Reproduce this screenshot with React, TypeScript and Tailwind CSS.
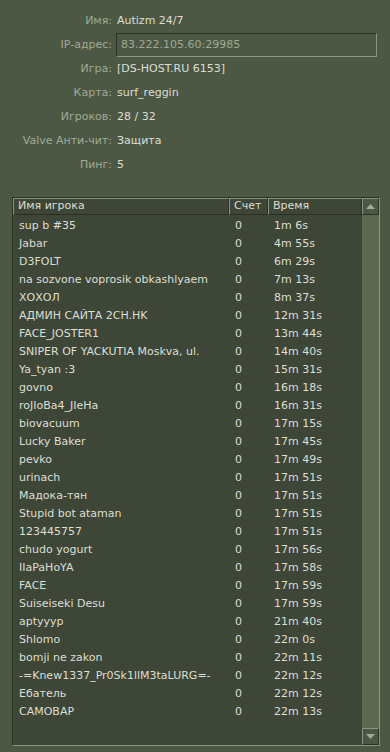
import React from "react";

const info: [string, string][] = [
  ["Имя", "Autizm 24/7"],
  ["IP-адрес", "83.222.105.60:29985"],
  ["Игра", "[DS-HOST.RU 6153]"],
  ["Карта", "surf_reggin"],
  ["Игроков", "28 / 32"],
  ["Valve Анти-чит", "Защита"],
  ["Пинг", "5"],
];

const players: [string, string][] = [
  ["sup b #35", "1m 6s"],
  ["Jabar", "4m 55s"],
  ["D3FOLT", "6m 29s"],
  ["na sozvone voprosik obkashlyaem", "7m 13s"],
  ["ХОХОЛ", "8m 37s"],
  ["АДМИН САЙТА 2CH.HK", "12m 31s"],
  ["FACE_JOSTER1", "13m 44s"],
  ["SNIPER OF YACKUTIA Moskva, ul.", "14m 40s"],
  ["Ya_tyan :3", "15m 31s"],
  ["govno", "16m 18s"],
  ["roJIoBa4_JIeHa", "16m 31s"],
  ["biovacuum", "17m 15s"],
  ["Lucky Baker", "17m 45s"],
  ["pevko", "17m 49s"],
  ["urinach", "17m 51s"],
  ["Мадока-тян", "17m 51s"],
  ["Stupid bot ataman", "17m 51s"],
  ["123445757", "17m 51s"],
  ["chudo yogurt", "17m 56s"],
  ["IIaPaHoYA", "17m 58s"],
  ["FACE", "17m 59s"],
  ["Suiseiseki Desu", "17m 59s"],
  ["aptyyyp", "21m 40s"],
  ["Shlomo", "22m 0s"],
  ["bomji ne zakon", "22m 11s"],
  ["-=Knew1337_Pr0Sk1llM3taLURG=-", "22m 12s"],
  ["Ебатель", "22m 12s"],
  ["САМОВАР", "22m 13s"],
];

function HeaderCell({ label, className }: { label: string; className: string }) {
  return (
    <div
      className={`h-[17px] flex items-center pl-[4px] border-t border-l border-t-[#8a957f] border-l-[#8a957f] border-b border-r border-b-[#2b3025] border-r-[#2b3025] text-[#dcdfd4] ${className}`}
    >
      {label}
    </div>
  );
}

function ScrollButton({ up }: { up: boolean }) {
  return (
    <div className="h-[17px] w-[17px] flex items-center justify-center border-t border-l border-t-[#8a957f] border-l-[#8a957f] border-b border-r border-b-[#2b3025] border-r-[#2b3025] bg-[#4c5844]">
      <svg width="9" height="5" viewBox="0 0 9 5">
        <polygon points={up ? "4.5,0 9,5 0,5" : "0,0 9,0 4.5,5"} fill="#a0aa95" />
      </svg>
    </div>
  );
}

export default function App() {
  return (
    <div
      className="w-[390px] h-[752px] bg-[#4c5844] text-[11px] overflow-hidden flex flex-col"
      style={{ fontFamily: '"DejaVu Sans", Verdana, sans-serif' }}
    >
      <div className="pt-[9px] flex flex-col">
        {info.map(([label, value]) => (
          <div key={label} className="h-[24px] flex items-center">
            <div className="w-[112px] text-right text-[#a0aa95] shrink-0">{label}:</div>
            {label === "IP-адрес" ? (
              <div className="ml-[4px] w-[261px] h-[24px] flex items-center pl-[4px] border border-t-[#2b3025] border-l-[#2b3025] border-b-[#8a957f] border-r-[#8a957f] text-[#a0aa95]">
                {value}
              </div>
            ) : (
              <div className="ml-[5px] text-[#dcdfd4]">{value}</div>
            )}
          </div>
        ))}
      </div>

      <div className="mt-[20px] ml-[12px] mr-[10px] h-[549px] flex border border-t-[#2b3025] border-l-[#2b3025] border-b-[#8a957f] border-r-[#8a957f] bg-[#3e4637]">
        <div className="flex-1 flex flex-col">
          <div className="flex">
            <HeaderCell label="Имя игрока" className="w-[216px]" />
            <HeaderCell label="Счет" className="w-[39px]" />
            <HeaderCell label="Время" className="flex-1" />
          </div>
          <div className="pt-[2px] flex flex-col text-[#dcdfd4]">
            {players.map(([name, time], i) => (
              <div key={i} className="h-[18px] flex items-center">
                <div className="w-[216px] pl-[6px] whitespace-nowrap overflow-hidden">{name}</div>
                <div className="w-[39px] pl-[6px]">0</div>
                <div className="pl-[6px]">{time}</div>
              </div>
            ))}
          </div>
        </div>
        <div className="w-[17px] flex flex-col bg-[#5b6a4f]">
          <ScrollButton up />
          <div className="flex-1" />
          <ScrollButton up={false} />
        </div>
      </div>
    </div>
  );
}
